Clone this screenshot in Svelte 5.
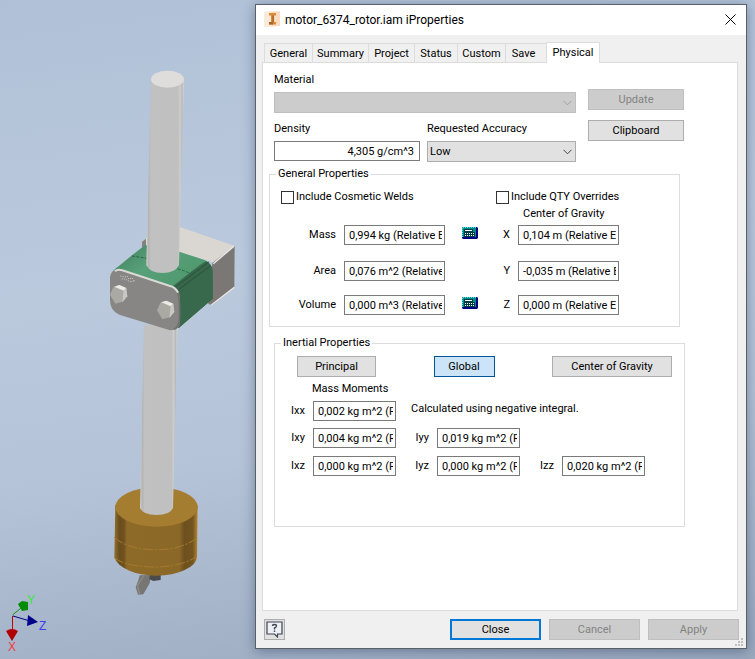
<script>
  const tabs = ['General', 'Summary', 'Project', 'Status', 'Custom', 'Save', 'Physical'];
  const activeTab = 'Physical';

  const totals = [
    { id: 'mass', label: 'Mass', value: '0,994 kg (Relative Error = 0,001%)', calc: true },
    { id: 'area', label: 'Area', value: '0,076 m^2 (Relative Error = 0,001%)', calc: false },
    { id: 'volume', label: 'Volume', value: '0,000 m^3 (Relative Error = 0,001%)', calc: true }
  ];

  const gravity = [
    { id: 'x', label: 'X', value: '0,104 m (Relative Error = 0,001%)' },
    { id: 'y', label: 'Y', value: '-0,035 m (Relative Error = 0,001%)' },
    { id: 'z', label: 'Z', value: '0,000 m (Relative Error = 0,001%)' }
  ];

  const moments = [
    [{ label: 'Ixx', value: '0,002 kg m^2 (Relative Error)' }],
    [
      { label: 'Ixy', value: '0,004 kg m^2 (Relative Error)' },
      { label: 'Iyy', value: '0,019 kg m^2 (Relative Error)' }
    ],
    [
      { label: 'Ixz', value: '0,000 kg m^2 (Relative Error)' },
      { label: 'Iyz', value: '0,000 kg m^2 (Relative Error)' },
      { label: 'Izz', value: '0,020 kg m^2 (Relative Error)' }
    ]
  ];
</script>

{#snippet chevron()}
  <svg class="chevron" viewBox="0 0 9 6" aria-hidden="true"><path d="M.5.8l4 4 4-4" /></svg>
{/snippet}

<div class="workspace">
  <div class="viewport">
    <svg class="model" viewBox="0 0 255 659" width="255" height="659" role="img" aria-label="Rotor assembly">
      <defs>
        <linearGradient id="rod">
          <stop offset="0" stop-color="#d2d2cf" />
          <stop offset=".06" stop-color="#b4b4b4" />
          <stop offset=".12" stop-color="#c1c1c1" />
          <stop offset=".84" stop-color="#c0c0c0" />
          <stop offset=".9" stop-color="#cdcdcd" />
          <stop offset=".95" stop-color="#b8b8b8" />
          <stop offset="1" stop-color="#dadad6" />
        </linearGradient>
        <linearGradient id="gold">
          <stop offset="0" stop-color="#96702c" />
          <stop offset=".06" stop-color="#694d1d" />
          <stop offset=".12" stop-color="#72531f" />
          <stop offset=".15" stop-color="#8e6a29" />
          <stop offset=".78" stop-color="#8c6828" />
          <stop offset=".84" stop-color="#6d501e" />
          <stop offset=".94" stop-color="#73541f" />
          <stop offset="1" stop-color="#b58730" />
        </linearGradient>
        <linearGradient id="green" x1="0" y1="0" x2="1" y2="1">
          <stop offset="0" stop-color="#3d7d5b" />
          <stop offset=".3" stop-color="#58a078" />
          <stop offset=".58" stop-color="#509a70" />
          <stop offset=".72" stop-color="#356349" />
          <stop offset="1" stop-color="#355f48" />
        </linearGradient>
      </defs>

      <g transform="translate(90 470) scale(.33333)">
        <path d="M149 316L183 315 179 340 160 373 144 374 137 352 146 328Z" fill="#787674" />
        <path d="M160 318l-18 30 7 24" fill="none" stroke="#8e8c89" stroke-width="4" />
        <path d="M179 315h33v15l-22 3-12-5z" fill="#4b4b4b" />
        <path d="M76 104L73 262Q80 286 118 302 150 316 199 317 250 317 284 300 318 286 321 262L323 104Z" fill="url(#gold)" />
        <ellipse cx="199.500" cy="111" rx="123.500" ry="59" fill="#a47d30" />
        <path d="M73 202Q95 224 145 235 200 243 250 235 300 222 321 203M73 263Q94 281 145 288 200 295 250 286 300 276 321 258" fill="none" stroke="#a47a2c" stroke-width="3" stroke-dasharray="30 5 7 5" />
      </g>
      <path d="M144 325L140 508Q143 515 156.500 515T173 508L177.500 325Z" fill="url(#rod)" />

      <g transform="translate(90 60) scale(.33333)">
        <path d="M156 545L169 535 272 502 434 558 372 608 270 577 157 562Z" fill="#dad7d3" />
        <path d="M156 545l12-9v20l-12 8z" fill="#85817e" />
        <path d="M434 558L433 682 367 735 355 732 367 609Z" fill="#7b7774" />
        <path d="M432 559L370 611M433 682L364 735" fill="none" stroke="#eceae7" stroke-width="4" />
        <path d="M64 645Q68 630 84 620L126 586 166 555 270 576 344 600Q366 610 368 632V716L266 804 150 740Z" fill="url(#green)" />
        <path d="M246 680Q276 657 306 633 330 614 348 603 366 612 368 632V716L266 804Z" fill="#38694d" />
        <path d="M256 682L357 605M263 690L362 617" stroke="#294f3b" stroke-width="4" opacity=".65" />
        <path d="M126 588l44 7M263 627Q310 638 318 660" fill="none" stroke="#286544" stroke-width="3" stroke-dasharray="9 4" />
        <path d="M60 650Q63 628 90 628L240 677Q270 685 270 712V785Q270 811 240 811L88 764Q60 752 60 720Z" fill="#878684" />
        <path d="M75 634Q82 627 97 631L240 678Q257 682 264 698" fill="none" stroke="#dad9d5" stroke-width="6" />
        <path d="M262 700Q271 712 268 783 265 801 252 808" fill="none" stroke="#73716f" stroke-width="5" />
        <path d="M91 648l14 3 7-2 4 8 10-3 8 9-14 2-15-8-12 0" fill="none" stroke="#d7d5d1" stroke-width="3" stroke-dasharray="3 4" />
        <g id="bolt">
          <path d="M60 704L71 680 88 675 109 684 112 708 98 725 76 731Z" fill="#aaa9a3" />
          <path d="M73 680L88 675 109 684 101 692Z" fill="#ebebe7" />
          <path d="M101 691L109 684 112 709 97 727Z" fill="#c9c8c2" />
        </g>
        <use href="#bolt" x="141" y="47" />
      </g>
      <path d="M151 79L146.300 265Q150 273 162.500 273T179 265L184 79Z" fill="url(#rod)" />
      <ellipse cx="167.500" cy="79.200" rx="16.500" ry="8.500" fill="#dedddc" />

      <g class="axes">
        <path d="M12.500 615L21 608" stroke="#0a9a0a" />
        <path d="M13 616L30 621" stroke="#00008b" />
        <path d="M12.500 616V632" stroke="#c00000" />
        <path d="M18 604L22 601 28 602V610L22 611Z" fill="#008c00" />
        <path d="M28 615L38 622 27 626Z" fill="#00008b" />
        <path d="M6 631Q12 627 18 631L12 641Z" fill="#b00000" />
        <text x="27" y="604" fill="#39e639">Y</text>
        <text x="39" y="630" fill="#3c3cf0">Z</text>
        <text x="8" y="651" fill="#f03c3c">X</text>
      </g>
    </svg>
  </div>

  <section class="dialog" aria-labelledby="dialog-title">
    <header class="titlebar">
      <svg class="app-icon" viewBox="0 0 16 16" aria-hidden="true">
        <path d="M0 1L16 0V15L0 16Z" fill="#fbdcc0" />
        <path d="M0 1L8 0V16H0Z" fill="#fdebd9" />
        <path d="M5 2h7v2.500h-2v6.500h2v2.500H5V11h2V4.500H5Z" fill="#d98a3a" />
        <path d="M8.500 4.500H10V11H8.500zM5 11h4v2.500H5z" fill="#a8622a" />
      </svg>
      <h1 id="dialog-title">motor_6374_rotor.iam iProperties</h1>
      <button class="dismiss" aria-label="Close window">
        <svg viewBox="0 0 11 11" aria-hidden="true"><path d="M.5.5l10 10M10.500.5l-10 10" /></svg>
      </button>
    </header>

    <div class="body">
      <div class="tabs" role="tablist">
        {#each tabs as tab}
          <button role="tab" class="tab" class:active={tab === activeTab} aria-selected={tab === activeTab}>{tab}</button>
        {/each}
      </div>

      <div class="panel" role="tabpanel">
        <div class="top">
          <div class="settings">
            <div class="field wide">
              <label for="material">Material</label>
              <div class="combo disabled">
                <select id="material" disabled><option></option></select>
                {@render chevron()}
              </div>
            </div>
            <div class="field">
              <label for="density">Density</label>
              <input id="density" class="density" type="text" value="4,305 g/cm^3" />
            </div>
            <div class="field">
              <label for="accuracy">Requested Accuracy</label>
              <div class="combo">
                <select id="accuracy"><option>Low</option></select>
                {@render chevron()}
              </div>
            </div>
          </div>
          <div class="actions">
            <button class="btn" disabled>Update</button>
            <button class="btn">Clipboard</button>
          </div>
        </div>

        <fieldset class="general">
          <legend>General Properties</legend>
          <div class="mass-side">
            <label class="check"><input type="checkbox" />Include Cosmetic Welds</label>
            <div class="rows totals">
              {#each totals as row}
                <div class="row">
                  <label for={row.id}>{row.label}</label>
                  <input id={row.id} type="text" value={row.value} />
                  {#if row.calc}
                    <svg class="calc" viewBox="0 0 16 12" aria-hidden="true">
                      <path d="M1 0H15L16 1V11L15 12H1L0 11V1Z" fill="#000080" />
                      <path d="M1 0H14V10H0V1Z" fill="#008c8c" />
                      <path d="M1 .5H14M.5 1V10" stroke="#58dede" stroke-dasharray="1 1" />
                      <path d="M2 2H11V5H2Z" fill="#003c46" />
                      <path d="M3 3H10V4H3Z" fill="#fff" />
                      <path d="M2 5H13V10H2Z" fill="#003c46" />
                      <path d="M3 6.500H13M3 8.500H13" stroke="#fff" stroke-dasharray="1 1" />
                    </svg>
                  {/if}
                </div>
              {/each}
            </div>
          </div>
          <div>
            <label class="check"><input type="checkbox" />Include QTY Overrides</label>
            <p class="caption">Center of Gravity</p>
            <div class="rows">
              {#each gravity as row}
                <div class="row">
                  <label for={row.id}>{row.label}</label>
                  <input id={row.id} type="text" value={row.value} />
                </div>
              {/each}
            </div>
          </div>
        </fieldset>

        <fieldset class="inertial">
          <legend>Inertial Properties</legend>
          <div class="modes">
            <button class="btn principal">Principal</button>
            <button class="btn global" aria-pressed="true">Global</button>
            <button class="btn cog">Center of Gravity</button>
          </div>
          <p class="heading">Mass Moments</p>
          <div class="moments">
            {#each moments as row, i}
              <div class="moment-row">
                {#each row as m}
                  <label for={m.label}>{m.label}</label>
                  <input id={m.label} type="text" value={m.value} />
                {/each}
                {#if i === 0}
                  <p class="note">Calculated using negative integral.</p>
                {/if}
              </div>
            {/each}
          </div>
        </fieldset>
      </div>

      <footer>
        <button class="btn help" aria-label="Help">
          <svg viewBox="0 0 17 17" aria-hidden="true">
            <path d="M1 1H16V13H11.500V16L8.500 13H1Z" fill="#eef0f4" stroke="#3c4654" stroke-width="1.200" />
            <path d="M6.500 5Q6.500 3.500 8.500 3.500T10.500 5Q10.500 6 8.500 7V8.500M8.500 9.500V11" fill="none" stroke="#3c4654" stroke-width="1.400" />
          </svg>
        </button>
        <button class="btn default">Close</button>
        <button class="btn" disabled>Cancel</button>
        <button class="btn" disabled>Apply</button>
      </footer>
    </div>
    <svg class="grip" viewBox="0 0 8 8" aria-hidden="true">
      <path d="M6 0h2v2H6zM3 3h2v2H3zM6 3h2v2H6zM0 6h2v2H0zM3 6h2v2H3zM6 6h2v2H6z" fill="#bfbfbf" />
    </svg>
  </section>
</div>

<style>
  .workspace {
    display: flex;
    min-height: 100vh;
    background: linear-gradient(172deg, #b0c1d7 0%, #bbc9dd 40%, #b4c3d7 65%, #9aa9be 100%);
    font-family: Roboto, 'DejaVu Sans Condensed', sans-serif;
    font-size: 11px;
    line-height: 16px;
    color: #000;
  }
  .workspace * {
    box-sizing: border-box;
  }
  .viewport {
    flex: 0 0 255px;
  }
  .model {
    display: block;
  }
  .axes {
    fill: none;
    font-family: 'Liberation Sans', sans-serif;
    font-size: 12px;
  }
  p,
  h1 {
    margin: 0;
    font-weight: 400;
  }
  button,
  input,
  select {
    margin: 0;
    font: inherit;
    color: inherit;
  }

  .dialog {
    position: relative;
    flex: 1;
    min-width: 0;
    display: flex;
    flex-direction: column;
    margin: 4px 8px 10px 0;
    border: 1px solid #5a6068;
    background: #f0f0f0;
    box-shadow: 0 2px 12px rgba(20, 35, 70, 0.4);
  }
  .titlebar {
    display: flex;
    align-items: center;
    height: 30px;
    padding: 0 10px 2px 8px;
    background: #fff;
  }
  .app-icon {
    width: 16px;
    height: 16px;
    margin-right: 5px;
  }
  h1 {
    flex: 1;
    padding-top: 2px;
    font-size: 12px;
    line-height: 16px;
  }
  .dismiss {
    display: flex;
    padding: 0;
    border: 0;
    background: none;
  }
  .dismiss svg {
    width: 11px;
    height: 11px;
    fill: none;
    stroke: #000;
  }

  .body {
    flex: 1;
    display: flex;
    flex-direction: column;
    padding: 7px 8px 0 6px;
  }
  .tabs {
    display: grid;
    grid-template-columns: 48px 56px 46px 43px 48px 41px 54px;
    align-items: end;
    margin: 0 0 -1px 2px;
    z-index: 1;
  }
  .tab {
    height: 19px;
    margin-bottom: 1px;
    padding: 2px 0 0;
    border: 1px solid #dcdcdc;
    border-width: 1px 0 0 1px;
    background: #f0f0f0;
    line-height: 16px;
  }
  .tab:has(+ .active) {
    padding-right: 5px;
  }
  .tab.active {
    height: 21px;
    margin-bottom: 0;
    padding: 0 0 1px;
    border-right-width: 1px;
    background: #fff;
  }
  .panel {
    flex: 1;
    padding: 9px 0 0 6px;
    border: 1px solid #dcdcdc;
    background: #fff;
  }
  .top {
    display: flex;
    gap: 12px;
    padding-left: 5px;
  }
  .settings {
    display: grid;
    grid-template-columns: 146px 149px;
    gap: 8px 7px;
  }
  .field {
    display: flex;
    flex-direction: column;
    gap: 4px;
  }
  .wide {
    grid-column: span 2;
  }
  .actions {
    display: flex;
    flex-direction: column;
    gap: 10px;
    width: 96px;
    padding-top: 17px;
  }
  input[type='text'] {
    width: 100%;
    height: 20px;
    padding: 0 2px 0 4px;
    border: 1px solid #7a7a7a;
    background: #fff;
    outline: 0;
  }
  input.density {
    text-align: right;
    padding-right: 5px;
  }
  .combo {
    display: grid;
    align-items: center;
  }
  .combo > :global(*) {
    grid-area: 1 / 1;
  }
  select {
    appearance: none;
    width: 100%;
    height: 21px;
    padding: 0 20px 0 2px;
    border: 1px solid #adadad;
    border-radius: 0;
    background: #e1e1e1;
  }
  select:disabled {
    border-color: #bfbfbf;
    background: #ccc;
    opacity: 1;
  }
  .chevron {
    justify-self: end;
    width: 9px;
    height: 6px;
    margin-right: 4px;
    fill: none;
    stroke: #404040;
    pointer-events: none;
  }
  .disabled .chevron {
    stroke: #a0a0a0;
  }
  .btn {
    height: 21px;
    padding: 1px 0 0;
    border: 1px solid #adadad;
    background: #e1e1e1;
    line-height: 16px;
    text-align: center;
  }
  .btn:disabled {
    border-color: #bfbfbf;
    background: #ccc;
    color: #838383;
  }

  fieldset {
    min-width: 0;
    margin: 0;
    padding: 0;
    border: 1px solid #dcdcdc;
  }
  legend {
    margin-left: 6px;
    padding: 0 2px;
    line-height: 14px;
  }
  .general {
    display: grid;
    grid-template-columns: 226px 1fr;
    height: 160px;
    margin: 5px 57px 9px 0;
    padding-top: 7px;
  }
  .mass-side {
    padding-left: 11px;
  }
  .check {
    display: flex;
    align-items: center;
    gap: 2px;
    line-height: 18px;
  }
  .check input {
    appearance: none;
    width: 13px;
    height: 13px;
    border: 1px solid #333;
    background: #fff;
  }
  .caption {
    padding-left: 27px;
    line-height: 16px;
    margin-bottom: 3px;
  }
  .rows {
    display: grid;
    grid-template-rows: 36px 34px 20px;
  }
  .row {
    display: grid;
    grid-template-columns: 14px 101px;
    gap: 8px;
    align-items: center;
    height: 20px;
  }
  .row label {
    text-align: right;
  }
  .totals {
    padding-top: 19px;
  }
  .totals .row {
    grid-template-columns: 55px 101px 25px;
  }
  .calc {
    justify-self: end;
    width: 16px;
    height: 12px;
    margin-bottom: 4px;
  }

  .inertial {
    height: 191px;
    margin: 0 52px 0 5px;
  }
  .modes {
    display: flex;
    justify-content: space-between;
    padding: 6px 12px 0 22px;
  }
  .principal {
    width: 79px;
  }
  .global {
    width: 61px;
    border-color: #005499;
    background: #cce4f7;
  }
  .cog {
    width: 120px;
  }
  .heading {
    padding-left: 37px;
    line-height: 24px;
  }
  .moments {
    display: grid;
    grid-template-rows: 27px 28px 20px;
  }
  .moment-row {
    display: grid;
    grid-template-columns: 30px 83px 25px 83px 26px 83px;
    gap: 8px;
    align-items: center;
    height: 20px;
  }
  .moment-row label {
    text-align: right;
  }
  .note {
    grid-column: span 4;
    padding-left: 7px;
    margin-bottom: 4px;
  }

  footer {
    display: grid;
    grid-template-columns: 21px 1fr repeat(3, 91px);
    column-gap: 8px;
    padding: 8px 0 8px 2px;
    margin-right: -1px;
  }
  .help {
    display: grid;
    place-items: center;
    padding: 0;
  }
  .help svg {
    width: 17px;
    height: 17px;
  }
  .default {
    grid-column: 3;
    border: 2px solid #0078d7;
  }
  .grip {
    position: absolute;
    right: 3px;
    bottom: 2px;
    width: 8px;
    height: 8px;
  }
</style>
